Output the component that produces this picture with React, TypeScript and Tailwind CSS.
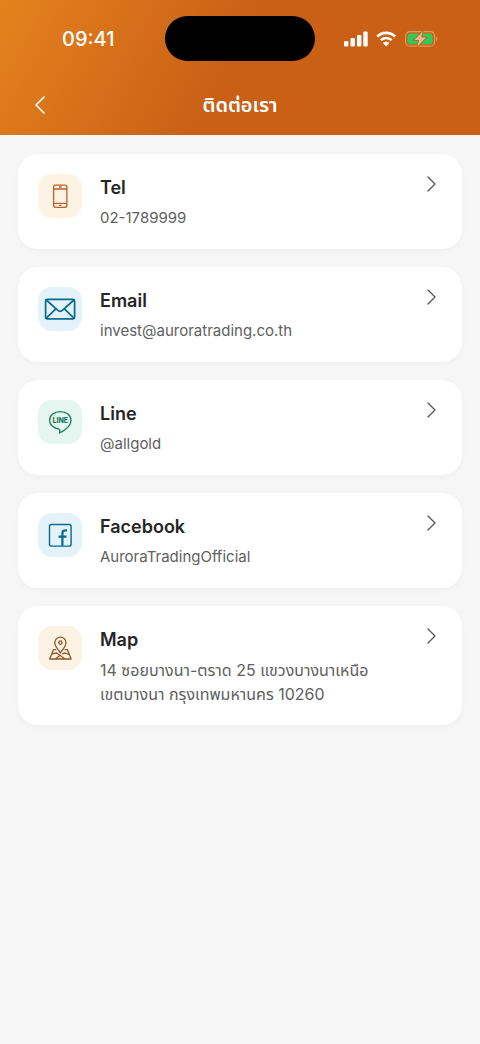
import React from "react";

interface ContactCardProps {
  href: string;
  icon: React.ElementType;
  tileClass: string;
  title: string;
  detail: React.ReactNode;
}

const contacts: ContactCardProps[] = [
  {
    href: "tel:021789999",
    icon: PhoneIcon,
    tileClass: "bg-[#fdf3e5] text-[#b8622a]",
    title: "Tel",
    detail: "02-1789999",
  },
  {
    href: "mailto:invest@auroratrading.co.th",
    icon: MailIcon,
    tileClass: "bg-[#e4f3fa] text-[#066b8c]",
    title: "Email",
    detail: "invest@auroratrading.co.th",
  },
  {
    href: "#line",
    icon: LineIcon,
    tileClass: "bg-[#e5f5ef] text-[#1c7a59]",
    title: "Line",
    detail: "@allgold",
  },
  {
    href: "#facebook",
    icon: FacebookIcon,
    tileClass: "bg-[#e4f3fa] text-[#066b8c]",
    title: "Facebook",
    detail: "AuroraTradingOfficial",
  },
  {
    href: "#map",
    icon: MapIcon,
    tileClass: "bg-[#fdf3e5] text-[#8c5a24]",
    title: "Map",
    detail: (
      <span className="block text-base leading-6">
        14 ซอยบางนา-ตราด 25 แขวงบางนาเหนือ
        <br />
        เขตบางนา กรุงเทพมหานคร 10260
      </span>
    ),
  },
];

function PhoneIcon() {
  return (
    <svg width="44" height="44" viewBox="0 0 44 44" fill="none" stroke="currentColor" strokeWidth="1.3" aria-hidden="true">
      <rect x="15.6" y="11.1" width="13.3" height="22.2" rx="2" />
      <path d="M15.6 15h13.3M15.6 29.3h13.3M21 13h2.6" />
      <path d="M21.4 31.3h1.6" strokeLinecap="round" />
    </svg>
  );
}

function MailIcon() {
  return (
    <svg width="44" height="44" viewBox="0 0 44 44" fill="none" stroke="currentColor" strokeWidth="1.7" strokeLinecap="round" strokeLinejoin="round" aria-hidden="true">
      <rect x="7.6" y="12.3" width="29" height="19.6" rx="1.6" />
      <path d="M8.3 13l11.3 10.2q2.5 2.2 5 0L35.9 13M8.3 31.2l9.5-9.4M35.9 31.2l-9.5-9.4" />
    </svg>
  );
}

function LineIcon() {
  return (
    <svg width="44" height="44" viewBox="0 0 44 44" fill="none" stroke="currentColor" aria-hidden="true">
      <path
        d="M22.3 11.6c-6 0-10.7 3.8-10.7 8.7 0 4.5 3.8 8 9.1 8.6 1.2.2 1.3.9 1.1 2.1l-.3 2c4.3-2.1 11.5-6.7 11.5-12.7 0-4.9-4.7-8.7-10.7-8.7z"
        strokeWidth="1.3"
        strokeLinejoin="round"
      />
      <text
        x="22.3"
        y="22.7"
        textAnchor="middle"
        fill="currentColor"
        stroke="none"
        className="font-['Inter','Liberation_Sans',sans-serif] text-[7px] font-extrabold"
      >
        LINE
      </text>
    </svg>
  );
}

function FacebookIcon() {
  return (
    <svg width="44" height="44" viewBox="0 0 44 44" fill="none" stroke="currentColor" strokeWidth="1.4" aria-hidden="true">
      <rect x="11.5" y="11.5" width="21.6" height="21.6" rx="1.8" />
      <path d="M29 17.4h-1.5c-2.1 0-3.1 1.1-3.1 3.1v12.3M20.5 23.6h8" strokeWidth="2.2" />
    </svg>
  );
}

function MapIcon() {
  return (
    <svg width="44" height="44" viewBox="0 0 44 44" fill="none" stroke="currentColor" strokeWidth="1.3" strokeLinejoin="round" aria-hidden="true">
      <path d="M22.4 27c-2-3.4-5.6-6.4-5.6-10.3a5.6 5.6 0 0 1 11.2 0c0 3.9-3.6 6.9-5.6 10.3z" />
      <circle cx="22.4" cy="16.6" r="1.7" />
      <path d="M18.2 23.6h-2.7L11.7 33h21.4l-3.8-9.4h-2.7M13.7 28l4.8-1.2L27 33M17.5 33l4.3-3.6M24.2 27.8l3-.8 4 1.6" />
    </svg>
  );
}

const StatusIcons = () => (
  <svg width="94" height="18" viewBox="0 0 94 18" fill="none" role="img" aria-label="Signal, Wi-Fi, battery charging">
    <g fill="white">
      <rect x="0" y="11" width="4.4" height="5.5" rx="1.3" />
      <rect x="6.5" y="8" width="4.4" height="8.5" rx="1.3" />
      <rect x="13" y="5" width="4.4" height="11.5" rx="1.3" />
      <rect x="19.3" y="1.5" width="4.4" height="15" rx="1.3" />
    </g>
    <g stroke="white" strokeWidth="2.7">
      <path d="M33.3 6.6a12.7 12.7 0 0 1 17.8 0" />
      <path d="M36.8 10.2a7.7 7.7 0 0 1 10.8 0" />
    </g>
    <path d="M38.9 13a4.8 4.8 0 0 1 6.6 0l-3.3 3.5z" fill="white" />
    <rect x="61.6" y="1.6" width="29" height="14.6" rx="4.5" stroke="#e39a59" strokeWidth="1.2" />
    <rect x="63.6" y="3.6" width="25" height="10.6" rx="2.8" fill="#34c759" />
    <path d="M92 6.7c1.9.7 1.9 3.8 0 4.500z" fill="#e39a59" />
    <path
      d="M78.8 1.2L70.6 10h4.6l-2 6.8 8.8-9.2h-4.9z"
      fill="#f2b98f"
      stroke="#c96016"
      strokeWidth="1.6"
      paintOrder="stroke"
    />
  </svg>
);

const ContactCard = ({ href, icon: Icon, tileClass, title, detail }: ContactCardProps) => {
  return (
    <a
      href={href}
      className="flex items-start rounded-[20px] bg-white px-5 pt-5 pb-[19px] shadow-[0_2px_6px_rgba(0,0,0,0.03)]"
    >
      <span className={`h-11 w-11 shrink-0 rounded-[14px] ${tileClass}`}>
        <Icon />
      </span>
      <span className="ml-[18px] min-w-0 flex-1">
        <span className="block text-lg leading-7 font-semibold text-[#252525]">{title}</span>
        <span className="mt-1 block text-[15px] leading-6 text-[#606060]">{detail}</span>
      </span>
      <svg width="20" height="20" viewBox="0 0 20 20" fill="none" className="shrink-0 text-[#555555]" aria-hidden="true">
        <path d="M6 3l7 7-7 7" stroke="currentColor" strokeWidth="1.3" strokeLinecap="round" strokeLinejoin="round" />
      </svg>
    </a>
  );
};

const App = () => {
  return (
    <div className="min-h-screen bg-[#f6f6f6] font-['Inter','Noto_Sans_Thai','Noto_Sans',sans-serif]">
      <header className="bg-[linear-gradient(118deg,#e4821e_0%,#c96016_48%,#c96016_100%)] text-white">
        {/* Status bar */}
        <div className="grid grid-cols-[1fr_150px_1fr] items-center pt-4">
          <span className="pl-[62px] text-xl leading-6 font-medium">09:41</span>
          <span className="h-[45px] rounded-full bg-black" />
          <span className="flex justify-end pr-[42px]">
            <StatusIcons />
          </span>
        </div>

        {/* Title bar */}
        <div className="grid grid-cols-[44px_1fr_44px] items-center px-[18px] pt-[22px] pb-2">
          <button type="button" aria-label="Back" className="flex h-11 items-center justify-center">
            <svg width="24" height="24" viewBox="0 0 24 24" fill="none" aria-hidden="true">
              <path d="M16 4l-8 8 8 8" stroke="currentColor" strokeWidth="1.7" strokeLinecap="round" strokeLinejoin="round" />
            </svg>
          </button>
          <h1 className="text-center text-xl font-semibold">ติดต่อเรา</h1>
        </div>
      </header>

      <main className="flex flex-col gap-[18px] px-[18px] pt-[19px] pb-8">
        {contacts.map((contact) => (
          <ContactCard key={contact.title} {...contact} />
        ))}
      </main>
    </div>
  );
};

export default App;
